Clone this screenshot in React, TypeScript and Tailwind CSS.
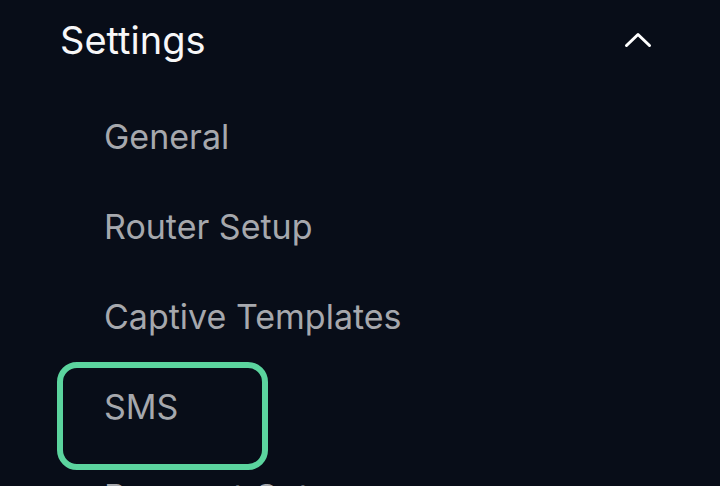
import React from "react";

const items = ["General", "Router Setup", "Captive Templates", "SMS", "Payment Gateways"];

const ChevronUp = () => (
  <svg width="30" height="18" viewBox="0 0 30 18" fill="none">
    <path d="M3.5 14.5L15 3.5L26.5 14.5" stroke="#ffffff" strokeWidth="3" strokeLinecap="round" strokeLinejoin="round" />
  </svg>
);

export default function App() {
  const active = "SMS";
  return (
    <div className="h-[486px] w-[720px] overflow-hidden bg-[#080d18] font-['Inter',sans-serif]">
      <div className="flex h-[80px] items-center justify-between pl-[60px] pr-[67px]">
        <span className="text-[38px] leading-[46px] text-[#f7f7f8]">Settings</span>
        <ChevronUp />
      </div>
      <ul className="mt-[12px]">
        {items.map((item) => (
          <li key={item} className="relative flex h-[90px] items-center pl-[104px]">
            {item === active && (
              <div className="absolute left-[57px] top-0 h-[108px] w-[211px] rounded-[20px] border-[6px] border-[#5bd49e]" />
            )}
            <span className="text-[34px] leading-[42px] text-[#a6a8ad]">{item}</span>
          </li>
        ))}
      </ul>
    </div>
  );
}
